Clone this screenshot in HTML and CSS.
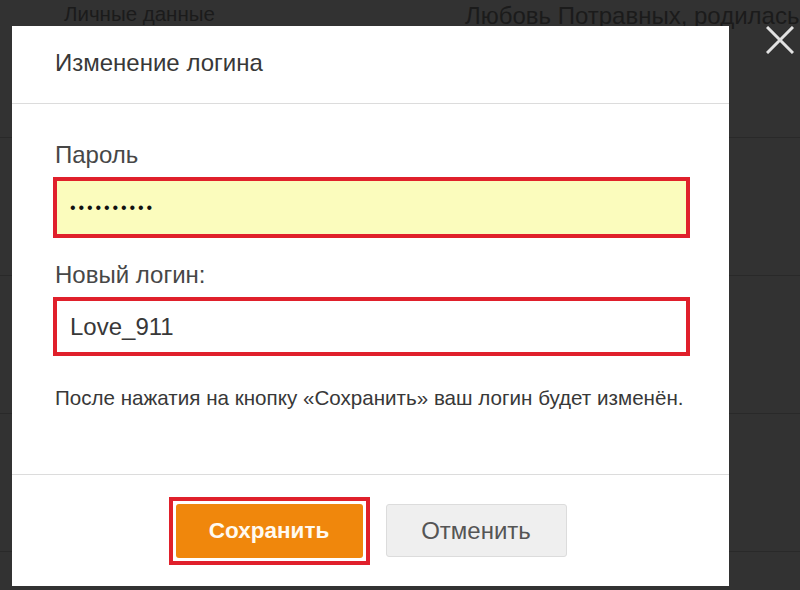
FILE: index.html
```html
<!DOCTYPE html>
<html lang="ru">
<head>
<meta charset="utf-8">
<title>Изменение логина</title>
<link rel="stylesheet" href="styles.css">
</head>
<body>
<div class="page">
  <div class="row row-first">
    <span class="bg-left">Личные данные</span>
    <span class="bg-right">Любовь Потравных, родилась</span>
  </div>
  <div class="row"></div>
  <div class="row"></div>
  <div class="row"></div>
</div>

<svg class="close" width="28" height="28" viewBox="0 0 28 28" aria-label="Закрыть">
  <path d="M1 1 L27 27 M27 1 L1 27" stroke="#e2e2e2" stroke-width="3" fill="none"/>
</svg>

<div class="modal">
  <div class="modal-head">Изменение логина</div>
  <div class="modal-body">
    <div class="label">Пароль</div>
    <div class="field field-pass"><span class="dots">••••••••••</span></div>
    <div class="label label-2">Новый логин:</div>
    <div class="field field-login"><span class="value">Love_911</span></div>
    <p class="note">После нажатия на кнопку «Сохранить» ваш логин будет изменён.</p>
  </div>
  <div class="modal-foot">
    <div class="mark"><button class="btn btn-save">Сохранить</button></div>
    <button class="btn btn-cancel">Отменить</button>
  </div>
</div>
</body>
</html>
```
FILE: styles.css
```css
* { box-sizing: border-box; }
html, body {
  margin: 0;
  padding: 0;
  width: 800px;
  height: 590px;
  overflow: hidden;
  background: #323232;
  font-family: "Liberation Sans", Arial, sans-serif;
}
.page {
  display: flex;
  flex-direction: column;
}
.row {
  height: 138px;
  border-bottom: 1px solid #292929;
  flex: none;
}
.row-first {
  display: flex;
  align-items: flex-start;
  color: #1b1b1b;
}
.bg-left {
  font-size: 20.5px;
  margin-left: 64px;
  margin-top: 2px;
}
.bg-right {
  font-size: 24px;
  margin-left: 250px;
  margin-top: 2px;
  white-space: nowrap;
}
.close {
  position: absolute;
  left: 766px;
  top: 26px;
}
.modal {
  position: absolute;
  left: 12px;
  top: 26px;
  width: 717px;
  height: 560px;
  background: #fff;
  display: flex;
  flex-direction: column;
}
.modal-head {
  height: 78px;
  display: flex;
  align-items: center;
  padding-left: 43px;
  padding-bottom: 3px;
  font-size: 24px;
  color: #383838;
  border-bottom: 1px solid #dcdcdc;
  flex: none;
}
.modal-body {
  padding: 38px 43px 0;
  flex: 1;
}
.label {
  font-size: 24px;
  line-height: 26px;
  color: #474747;
}
.label-2 { margin-top: 24px; }
.field {
  margin: 9px 0 0 -2px;
  width: 637px;
  border: 4px solid #e0202b;
  display: flex;
  align-items: center;
  padding-left: 13px;
}
.field-pass {
  height: 61px;
  background: #fbfcbd;
}
.field-login {
  height: 59px;
  background: #fff;
}
.dots {
  font-size: 16px;
  letter-spacing: 2.9px;
  color: #111;
}
.value {
  font-size: 24px;
  color: #383838;
}
.note {
  margin: 30px 0 0;
  font-size: 20.6px;
  color: #383838;
  white-space: nowrap;
}
.modal-foot {
  height: 112px;
  border-top: 1px solid #dcdcdc;
  display: flex;
  align-items: center;
  justify-content: center;
  gap: 16px;
  padding-right: 6px;
  flex: none;
}
.mark {
  border: 4px solid #e0202b;
  padding: 3px;
}
.btn {
  font-family: "Liberation Sans", Arial, sans-serif;
  font-size: 22px;
  border-radius: 3px;
  display: block;
}
.btn-save {
  width: 187px;
  height: 54px;
  background: #f0870c;
  border: none;
  color: #fffaf0;
  font-weight: bold;
  font-size: 22.5px;
}
.btn-cancel {
  width: 181px;
  height: 53px;
  background: #efefef;
  border: 1px solid #dcdcdc;
  color: #555;
  font-size: 24px;
}
```
